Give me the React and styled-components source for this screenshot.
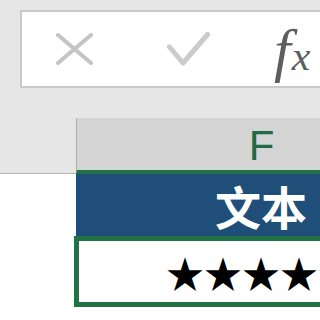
import React from 'react'
import styled, { createGlobalStyle } from 'styled-components'

const GlobalStyle = createGlobalStyle`
  html, body {
    margin: 0;
    padding: 0;
    background: #ffffff;
  }
`

const Page = styled.div`
  width: 320px;
  height: 320px;
  overflow: hidden;
  background: #e6e6e6;
  display: flex;
  flex-direction: column;
`

const FormulaBar = styled.div`
  margin: 10px 0 0 20px;
  height: 78px;
  box-sizing: border-box;
  border: 2px solid #c9c9c9;
  border-right: none;
  background: #ffffff;
  display: flex;
  align-items: center;
  padding-left: 34px;
  flex-shrink: 0;
`

const BarIcon = styled.svg`
  flex-shrink: 0;
  margin-left: ${(p) => p.gap || 0}px;
`

const Fx = styled.span`
  margin-left: 64px;
  margin-top: 2px;
  font-family: "Liberation Serif", serif;
  font-style: italic;
  color: #5e5e5e;
  line-height: 1;
  white-space: nowrap;
  display: flex;
  align-items: baseline;
`

const FxF = styled.span`
  font-size: 60px;
`

const FxX = styled.span`
  font-size: 42px;
  margin-left: 1px;
`

const HeaderRow = styled.div`
  margin-top: 30px;
  height: 56px;
  display: flex;
  flex-shrink: 0;
`

const Corner = styled.div`
  width: 76px;
  flex-shrink: 0;
  box-sizing: border-box;
  border-bottom: 1px solid #b5b5b5;
`

const ColHeader = styled.div`
  width: 370px;
  flex-shrink: 0;
  box-sizing: border-box;
  background: #d4d4d4;
  border-left: 1px solid #ababab;
  border-bottom: 4px solid #217346;
  display: flex;
  align-items: center;
  justify-content: center;
  padding-top: 4px;
  font-family: "Liberation Sans", sans-serif;
  font-size: 42px;
  color: #1f6b45;
`

const Sheet = styled.div`
  flex: 1;
  background: #ffffff;
  display: flex;
  flex-direction: column;
`

const Row = styled.div`
  display: flex;
  height: ${(p) => p.h}px;
  flex-shrink: 0;
`

const RowSpacer = styled.div`
  width: ${(p) => p.w}px;
  flex-shrink: 0;
`

const TitleCell = styled.div`
  width: 370px;
  flex-shrink: 0;
  background: #1f4e78;
  color: #ffffff;
  font-family: "Noto Sans CJK SC", sans-serif;
  font-weight: 700;
  font-size: 46px;
  display: flex;
  align-items: center;
  justify-content: center;
  white-space: nowrap;
`

const SelectedCell = styled.div`
  width: 374px;
  flex-shrink: 0;
  box-sizing: border-box;
  border: 5px solid #217346;
  background: #ffffff;
  color: #000000;
  font-family: "Noto Sans CJK SC", sans-serif;
  font-size: 38px;
  display: flex;
  align-items: center;
  justify-content: center;
  white-space: nowrap;
`

export default function App () {
  return (
    <>
      <GlobalStyle />
      <Page>
        <FormulaBar>
          <BarIcon width='37' height='32' viewBox='0 0 37 32'>
            <path d='M2 2 L35 30 M35 2 L2 30' stroke='#c4c4c4' strokeWidth='4' strokeLinecap='round' fill='none' />
          </BarIcon>
          <BarIcon gap={74} width='43' height='34' viewBox='0 0 43 34'>
            <path d='M2.5 15 L16 31 L40.5 2.5' stroke='#cbcbcb' strokeWidth='5' strokeLinecap='round' strokeLinejoin='round' fill='none' />
          </BarIcon>
          <Fx><FxF>f</FxF><FxX>x</FxX></Fx>
        </FormulaBar>
        <HeaderRow>
          <Corner />
          <ColHeader>F</ColHeader>
        </HeaderRow>
        <Sheet>
          <Row h={62}>
            <RowSpacer w={76} />
            <TitleCell>文本</TitleCell>
          </Row>
          <Row h={71}>
            <RowSpacer w={74} />
            <SelectedCell>★★★★★</SelectedCell>
          </Row>
        </Sheet>
      </Page>
    </>
  )
}
